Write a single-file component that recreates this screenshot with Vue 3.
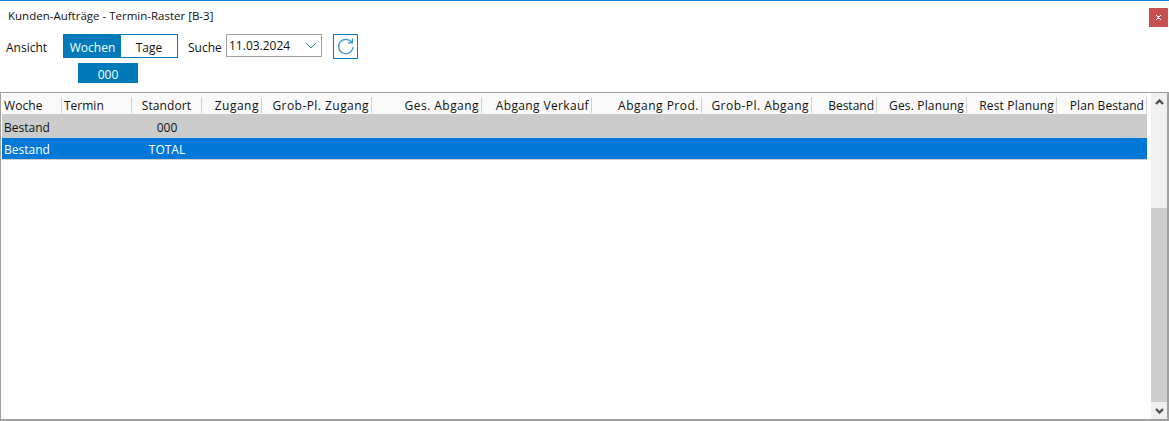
<script setup>
// sperrung: Open Sans laeuft in manchen Spalten etwas schmaler als das Original
const spalten = [
  { name: 'Woche', breite: 60, ausrichtung: 'left', sperrung: 0.1 },
  { name: 'Termin', breite: 70, ausrichtung: 'left', sperrung: 0 },
  { name: 'Standort', breite: 70, ausrichtung: 'center', sperrung: 0.1 },
  { name: 'Zugang', breite: 60, ausrichtung: 'right', sperrung: 0.5 },
  { name: 'Grob-Pl. Zugang', breite: 110, ausrichtung: 'right', sperrung: 0.45 },
  { name: 'Ges. Abgang', breite: 110, ausrichtung: 'right', sperrung: 0.45 },
  { name: 'Abgang Verkauf', breite: 110, ausrichtung: 'right', sperrung: 0.35 },
  { name: 'Abgang Prod.', breite: 110, ausrichtung: 'right', sperrung: 0.5 },
  { name: 'Grob-Pl. Abgang', breite: 110, ausrichtung: 'right', sperrung: 0.47 },
  { name: 'Bestand', breite: 65, ausrichtung: 'right', sperrung: 0 },
  { name: 'Ges. Planung', breite: 90, ausrichtung: 'right', sperrung: 0.17 },
  { name: 'Rest Planung', breite: 90, ausrichtung: 'right', sperrung: 0.17 },
  { name: 'Plan Bestand', breite: 90, ausrichtung: 'right', sperrung: 0.08 }
]
const rasterSpalten = spalten.map((s) => s.breite + 'px').join(' ')

const zeilen = [
  { art: 'Bestand', standort: '000', klasse: 'grau' },
  { art: 'Bestand', standort: 'TOTAL', klasse: 'blau' }
]
</script>

<template>
  <div class="fenster">
    <div class="titelzeile">
      <span class="titel">Kunden-Aufträge - Termin-Raster [B-3]</span>
      <button class="schliessen">
        <svg width="7" height="7" viewBox="0 0 7 7">
          <path d="M1 1h1v1h3V1h1v1H5v1H4v1h1v1h1v1H5V5H2v1H1V5h1V4h1V3H2V2H1z" fill="#fff" />
        </svg>
      </button>
    </div>

    <div class="werkzeug">
      <span class="ansicht">Ansicht</span>
      <div class="umschalter">
        <span class="wochen">Wochen</span>
        <span class="tage">Tage</span>
      </div>
      <span class="suche">Suche</span>
      <div class="datum">
        <span>11.03.2024</span>
        <svg width="12" height="7" viewBox="0 0 12 7">
          <path d="M1 1l5 5 5-5" fill="none" stroke="#2c7fb8" stroke-width="1" />
        </svg>
      </div>
      <button class="neu">
        <svg width="20" height="20" viewBox="0 0 20 20">
          <path d="M15.6 5.2A7.2 7.2 0 1 0 17 10" fill="none" stroke="#3a94cc" stroke-width="1.2" />
          <path d="M16.4 1.4v4.4H12" fill="none" stroke="#3a94cc" stroke-width="1.2" />
        </svg>
      </button>
    </div>

    <div class="lagerzeile">
      <span class="lager">000</span>
    </div>

    <div class="tabelle">
      <div class="inhalt">
        <div class="kopf" :style="{ gridTemplateColumns: rasterSpalten }">
          <div
            v-for="s in spalten"
            :key="s.name"
            class="kopfzelle"
            :style="{ textAlign: s.ausrichtung, letterSpacing: s.sperrung + 'px' }"
          >
            {{ s.name }}
          </div>
        </div>
        <div
          v-for="z in zeilen"
          :key="z.standort"
          class="zeile"
          :class="z.klasse"
          :style="{ gridTemplateColumns: rasterSpalten }"
        >
          <div class="art">{{ z.art }}</div>
          <div></div>
          <div class="standort">{{ z.standort }}</div>
        </div>
        <div class="linie"></div>
      </div>
      <div class="scrollbar">
        <div class="pfeil">
          <svg width="9" height="6" viewBox="0 0 9 6">
            <path d="M1 5l3.5-3.5L8 5" fill="none" stroke="#505050" stroke-width="2.4" />
          </svg>
        </div>
        <div class="spur"></div>
        <div class="griff"></div>
        <div class="pfeil">
          <svg width="9" height="6" viewBox="0 0 9 6">
            <path d="M1 1l3.5 3.5L8 1" fill="none" stroke="#505050" stroke-width="2.4" />
          </svg>
        </div>
      </div>
    </div>
  </div>
</template>

<style>
html,
body {
  margin: 0;
  background: #fff;
}
</style>

<style scoped>
.fenster {
  width: 1169px;
  height: 421px;
  box-sizing: border-box;
  border-top: 1px solid #0f86d8;
  background: #fff;
  color: #111;
  font-family: "Open Sans", "Noto Sans", sans-serif;
  font-size: 12px;
  display: flex;
  flex-direction: column;
  overflow: hidden;
}

.titelzeile {
  height: 33px;
  display: flex;
  align-items: flex-start;
  justify-content: space-between;
  padding: 7px 1px 0 8px;
  box-sizing: border-box;
}

.titel {
  font-size: 11.5px;
  line-height: 16px;
}

.schliessen {
  width: 19px;
  height: 19px;
  padding: 0;
  border: 0;
  background: #c75050;
  display: flex;
  align-items: center;
  justify-content: center;
}

.werkzeug {
  height: 25px;
  display: flex;
  align-items: flex-start;
  padding-left: 6px;
}

.ansicht {
  width: 57px;
  line-height: 27px;
}

.umschalter {
  width: 115px;
  height: 24px;
  box-sizing: border-box;
  border: 1px solid #007ab8;
  display: flex;
  line-height: 26px;
  text-align: center;
}

.wochen {
  width: 57px;
  background: #007ab8;
  color: #fff;
}

.tage {
  flex: 1;
}

.suche {
  margin-left: 10px;
  width: 38px;
  line-height: 27px;
}

.datum {
  width: 96px;
  height: 23px;
  box-sizing: border-box;
  border: 1px solid #a0a0a0;
  display: flex;
  align-items: center;
  justify-content: space-between;
  padding: 0 4px 0 2px;
}

.neu {
  margin-left: 11px;
  width: 25px;
  height: 25px;
  padding: 0;
  box-sizing: border-box;
  border: 1px solid #007ab8;
  background: #fff;
  display: flex;
  align-items: center;
  justify-content: center;
}

.lagerzeile {
  height: 33px;
  padding: 4px 0 0 78px;
  box-sizing: border-box;
}

.lager {
  display: block;
  width: 60px;
  height: 20px;
  line-height: 24px;
  text-align: center;
  background: #007ab8;
  color: #fff;
}

.tabelle {
  flex: 1;
  min-height: 0;
  box-sizing: border-box;
  border: 1px solid #a0a0a0;
  border-bottom-width: 2px;
  border-right-width: 2px;
  padding-left: 1px;
  display: flex;
}

.inhalt {
  width: 1145px;
}

.kopf {
  height: 21px;
  display: grid;
  background: #f9f9f9;
}

.kopfzelle {
  border-right: 1px solid #d0d0d0;
  height: 16px;
  margin-top: 4px;
  line-height: 18px;
  padding: 0 2px;
  white-space: nowrap;
}

.zeile {
  display: grid;
  align-items: center;
}

.zeile.grau {
  height: 24px;
  line-height: 28px;
  background: #cbcbcb;
}

.zeile.blau {
  height: 21px;
  line-height: 23px;
  background: #0078d7;
  color: #fff;
}

.art {
  padding-left: 2px;
}

.standort {
  text-align: center;
}

.linie {
  height: 1px;
  background: #d0d0d0;
}

.scrollbar {
  margin-left: 4px;
  width: 16px;
  background: #f0f0f0;
  display: flex;
  flex-direction: column;
}

.pfeil {
  height: 17px;
  display: flex;
  align-items: center;
  justify-content: center;
}

.spur {
  height: 98px;
}

.griff {
  flex: 1;
  background: #cdcdcd;
}
</style>
